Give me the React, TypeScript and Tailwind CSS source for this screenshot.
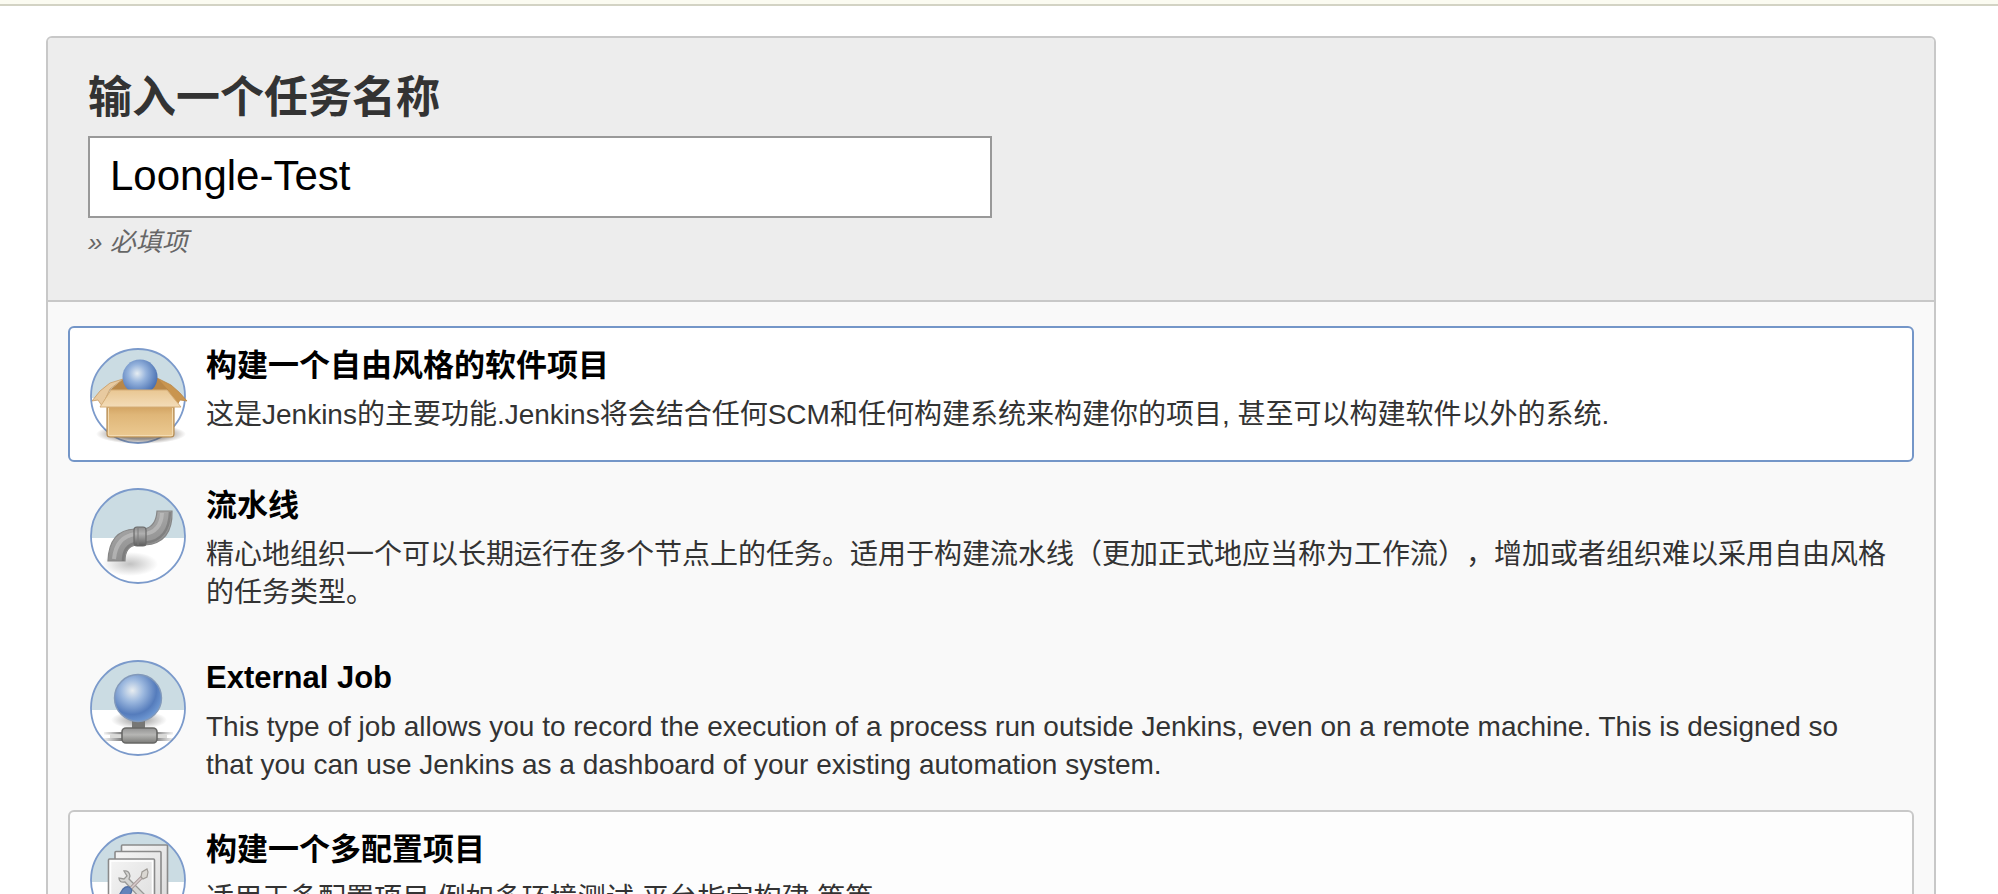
import { useState } from 'react';
import type { ReactNode } from 'react';
import clsx from 'clsx';

type JobType = {
  id: string;
  name: string;
  description: string;
  icon: ReactNode;
};

const JOB_TYPES: JobType[] = [
  {
    id: 'freestyle',
    name: '构建一个自由风格的软件项目',
    description:
      '这是Jenkins的主要功能.Jenkins将会结合任何SCM和任何构建系统来构建你的项目, 甚至可以构建软件以外的系统.',
    icon: <BoxIcon />,
  },
  {
    id: 'pipeline',
    name: '流水线',
    description:
      '精心地组织一个可以长期运行在多个节点上的任务。适用于构建流水线（更加正式地应当称为工作流），增加或者组织难以采用自由风格的任务类型。',
    icon: <PipeIcon />,
  },
  {
    id: 'external',
    name: 'External Job',
    description:
      'This type of job allows you to record the execution of a process run outside Jenkins, even on a remote machine. This is designed so that you can use Jenkins as a dashboard of your existing automation system.',
    icon: <NetworkIcon />,
  },
  {
    id: 'matrix',
    name: '构建一个多配置项目',
    description: '适用于多配置项目,例如多环境测试,平台指定构建,等等.',
    icon: <PagesIcon />,
  },
];

export default function App() {
  const [name, setName] = useState('Loongle-Test');
  const [selected, setSelected] = useState('freestyle');
  const [hovered, setHovered] = useState('matrix');

  return (
    <div
      lang="zh-CN"
      className="h-screen overflow-hidden bg-white font-['Liberation_Sans','Noto_Sans_CJK_SC',sans-serif] [text-spacing-trim:space-all]"
    >
      <div className="h-1.5 border-b-2 border-[#d3d3c4] bg-[#fbfbf1]" />

      <form
        className="mt-[30px] mr-[62px] ml-[46px] rounded-md border-2 border-[#c8c8c8] bg-[#f9f9f9]"
        onSubmit={(e) => e.preventDefault()}
      >
        <div className="rounded-t-sm border-b-2 border-[#c8c8c8] bg-[#ededed] px-10 pt-8 pb-10">
          <label
            htmlFor="name"
            className="block text-[44px] leading-[56px] font-bold text-[#333]"
          >
            输入一个任务名称
          </label>
          <input
            id="name"
            type="text"
            value={name}
            onChange={(e) => setName(e.target.value)}
            className="mt-2.5 block h-[82px] w-full max-w-[904px] border-2 border-[#999] bg-white px-5 pb-0.5 text-[42px] text-black outline-none"
          />
          <p className="mt-1.5 text-[26px] leading-9 text-[#666] italic">
            » 必填项
          </p>
        </div>

        <ul className="flex flex-col gap-1 px-5 pt-6 pb-5">
          {JOB_TYPES.map((job) => (
            <li key={job.id}>
              <label
                onMouseEnter={() => setHovered(job.id)}
                className={clsx(
                  'flex cursor-pointer items-start gap-5 rounded-md border-2 px-5 pt-5 pb-4',
                  selected === job.id
                    ? 'border-[#7496c8] bg-white'
                    : hovered === job.id
                      ? 'border-[#c8c8c8] bg-[#fdfdfd]'
                      : 'border-transparent'
                )}
              >
                <input
                  type="radio"
                  name="mode"
                  value={job.id}
                  checked={selected === job.id}
                  onChange={() => setSelected(job.id)}
                  className="sr-only"
                />
                {job.icon}
                <span className="min-w-0 flex-1 pb-1">
                  <span className="block text-[31px] leading-9 font-bold text-black">
                    {job.name}
                  </span>
                  <span className="mt-3 block text-[28px] leading-[38px] text-[#333]">
                    {job.description}
                  </span>
                </span>
              </label>
            </li>
          ))}
        </ul>
      </form>
    </div>
  );
}

// Round sky/ground badge shared by all the job icons
function Badge({ children }: { children: ReactNode }) {
  return (
    <svg
      viewBox="0 0 96 96"
      aria-hidden="true"
      className="size-24 shrink-0 overflow-visible"
    >
      <circle cx="48" cy="48" r="47" fill="#fff" />
      <path d="M1.05 50A47 47 0 1 1 94.95 50z" fill="#cbdce3" />
      <circle
        cx="48"
        cy="48"
        r="47"
        fill="none"
        stroke="#7b9acb"
        strokeWidth="1.8"
      />
      {children}
    </svg>
  );
}

function BoxIcon() {
  return (
    <Badge>
      <defs>
        <radialGradient id="box-ball" cx="0.42" cy="0.4" r="0.65">
          <stop offset="0" stopColor="#e6edf2" />
          <stop offset="0.4" stopColor="#94b2dc" />
          <stop offset="1" stopColor="#4068ac" />
        </radialGradient>
        <linearGradient id="box-body" x1="0" y1="0" x2="0" y2="1">
          <stop offset="0" stopColor="#cf9f5e" />
          <stop offset="0.3" stopColor="#dfb678" />
          <stop offset="1" stopColor="#ecca92" />
        </linearGradient>
        <linearGradient id="box-flap" x1="0" y1="0" x2="0" y2="1">
          <stop offset="0" stopColor="#e9c793" />
          <stop offset="1" stopColor="#f3dcb8" />
        </linearGradient>
        <radialGradient id="box-shadow">
          <stop offset="0.5" stopColor="#4a4038" stopOpacity="0.6" />
          <stop offset="1" stopColor="#4a4038" stopOpacity="0" />
        </radialGradient>
      </defs>
      <ellipse cx="51" cy="86" rx="45" ry="10" fill="url(#box-shadow)" />
      <path d="M20 42 33 31H69L79 42z" fill="#b98747" />
      <path
        d="M33 31 20 35Q9 42 2 53L8 52 12 58 20 41z"
        fill="#e8caa0"
        stroke="#c79b64"
        strokeWidth="0.8"
      />
      <path
        d="M67 30 81 37Q90 44 97 53L90 52 87 57 77 41z"
        fill="#c9954f"
        stroke="#b98748"
        strokeWidth="0.8"
      />
      <circle cx="50" cy="29" r="17.5" fill="url(#box-ball)" />
      <path
        d="M17 57H84V86Q84 89 81 89H20Q17 89 17 86z"
        fill="url(#box-body)"
        stroke="#b58d57"
        strokeWidth="1.2"
      />
      <path
        d="M18.500 60V87.500H82.500V60"
        fill="none"
        stroke="#f3dbb1"
        strokeWidth="1"
      />
      <path
        d="M21 42H77L91 59H10z"
        fill="url(#box-flap)"
        stroke="#d5ae78"
        strokeWidth="1"
      />
    </Badge>
  );
}

function PipeIcon() {
  return (
    <Badge>
      <defs>
        <linearGradient id="pipe-metal" x1="0" y1="0" x2="0.4" y2="1">
          <stop offset="0" stopColor="#b2b2b2" />
          <stop offset="1" stopColor="#8c8c8c" />
        </linearGradient>
        <linearGradient id="pipe-collar" x1="0" y1="0" x2="0" y2="1">
          <stop offset="0" stopColor="#8d8d8d" />
          <stop offset="0.35" stopColor="#b0b0b0" />
          <stop offset="1" stopColor="#5c5c5c" />
        </linearGradient>
        <radialGradient id="pipe-shadow">
          <stop offset="0" stopColor="#777" stopOpacity="0.45" />
          <stop offset="1" stopColor="#777" stopOpacity="0" />
        </radialGradient>
      </defs>
      <ellipse cx="40" cy="76" rx="28" ry="12" fill="url(#pipe-shadow)" />
      <path
        d="M18 73Q19 42 45 41H54Q66 39 67 23H82Q83 55 55 57H47Q35 58 35 73z"
        fill="url(#pipe-metal)"
        stroke="#868686"
        strokeWidth="1.2"
      />
      <path
        d="M24 71Q26 49 45 46H54Q71 44 72 25"
        fill="none"
        stroke="#c4c4c4"
        strokeWidth="4"
        strokeOpacity="0.6"
      />
      <path
        d="M33 73Q33 57 47 54.500H56Q79 52 80 24"
        fill="none"
        stroke="#6c6c6c"
        strokeWidth="2.5"
        strokeOpacity="0.55"
      />
      <rect
        x="44"
        y="39"
        width="12"
        height="19"
        rx="3"
        fill="url(#pipe-collar)"
        stroke="#6a6a6a"
        strokeWidth="1.2"
      />
      <path d="M48 40V57" stroke="#7c7c7c" strokeWidth="1" />
    </Badge>
  );
}

function NetworkIcon() {
  return (
    <Badge>
      <defs>
        <radialGradient id="net-ball" cx="0.38" cy="0.34" r="0.68">
          <stop offset="0" stopColor="#e8edf0" />
          <stop offset="0.35" stopColor="#9db9df" />
          <stop offset="0.75" stopColor="#557cbc" />
          <stop offset="1" stopColor="#6f99d3" />
        </radialGradient>
        <linearGradient id="net-metal" x1="0" y1="0" x2="0" y2="1">
          <stop offset="0" stopColor="#929292" />
          <stop offset="0.45" stopColor="#b6b6b4" />
          <stop offset="1" stopColor="#7b7b78" />
        </linearGradient>
        <radialGradient id="net-shadow">
          <stop offset="0.2" stopColor="#555" stopOpacity="0.5" />
          <stop offset="1" stopColor="#555" stopOpacity="0" />
        </radialGradient>
        <linearGradient id="net-cable" x1="0" y1="0" x2="1" y2="0">
          <stop offset="0" stopColor="#777" stopOpacity="0.1" />
          <stop offset="0.3" stopColor="#666" />
          <stop offset="0.7" stopColor="#666" />
          <stop offset="1" stopColor="#777" stopOpacity="0.1" />
        </linearGradient>
      </defs>
      <ellipse cx="49" cy="60" rx="28" ry="9" fill="url(#net-shadow)" />
      <rect x="14" y="72" width="69" height="2.5" fill="url(#net-cable)" />
      <rect x="14" y="78" width="69" height="3" fill="url(#net-cable)" />
      <rect x="20" y="74.5" width="57" height="3.5" fill="#dadad8" />
      <rect x="42" y="60" width="13" height="10" fill="#777775" />
      <rect
        x="32"
        y="68"
        width="35"
        height="15"
        rx="4"
        fill="url(#net-metal)"
        stroke="#686866"
        strokeWidth="1.6"
      />
      <circle
        cx="48"
        cy="38"
        r="23.5"
        fill="url(#net-ball)"
        stroke="#8299ba"
        strokeWidth="1.4"
      />
    </Badge>
  );
}

function PagesIcon() {
  return (
    <Badge>
      <defs>
        <linearGradient id="pages-sheet" x1="0" y1="0" x2="1" y2="1">
          <stop offset="0" stopColor="#f4f4f4" />
          <stop offset="1" stopColor="#dcdcdc" />
        </linearGradient>
      </defs>
      <g fill="url(#pages-sheet)" stroke="#8a8a8a" strokeWidth="1.6">
        <rect x="31.500" y="13" width="46" height="58" rx="1" />
        <rect x="25" y="19.500" width="46" height="59" rx="1" />
        <rect x="18.500" y="27" width="46" height="59" rx="1" />
      </g>
      <rect
        x="20.500"
        y="29"
        width="42"
        height="55"
        fill="none"
        stroke="#fff"
        strokeWidth="1.6"
      />
      <path
        d="M34 39q5-1 6 5l-1 3 18 18q2 3-1 4-2 1-4-1L35 50q-6 1-6-4l5 1 3-3z"
        fill="#d5d5d3"
        stroke="#989896"
        strokeWidth="1.3"
      />
      <path d="M53 44 38 59" stroke="#ab9c9c" strokeWidth="3.4" />
      <path d="M53 44 38 59" stroke="#d7cccc" strokeWidth="1.4" />
      <path
        d="m51 45 1-5 5-3 1 3-1 5-4 2z"
        fill="#dad7d2"
        stroke="#9f9b96"
        strokeWidth="1.2"
      />
      <path
        d="M39 55q4 2 2 6L33 72q-4 3-6-1-1-3 1-6l5-8q3-3 6-2z"
        fill="#6384bb"
        stroke="#4f6ea3"
        strokeWidth="1.3"
      />
    </Badge>
  );
}
